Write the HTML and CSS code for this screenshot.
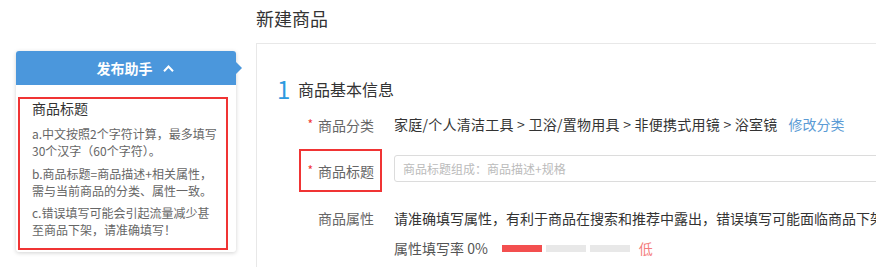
FILE: index.html
```html
<!DOCTYPE html>
<html lang="zh-CN">
<head>
<meta charset="utf-8">
<title>新建商品</title>
<link rel="stylesheet" href="styles.css">
</head>
<body>
<div class="page">
  <aside class="side">
    <div class="helper">
      <div class="helper-head">
        <span class="helper-title">发布助手</span>
        <svg class="chev" width="11" height="7" viewBox="0 0 11 7"><polyline points="1,6.2 5.5,1.5 10,6.2" fill="none" stroke="#fff" stroke-width="2"/></svg>
      </div>
      <div class="helper-body">
        <div class="tip-box">
          <div class="tip-title">商品标题</div>
          <p class="tip">a.中文按照2个字符计算，最多填写<br>30个汉字（60个字符）。</p>
          <p class="tip">b.商品标题=商品描述+相关属性，<br>需与当前商品的分类、属性一致。</p>
          <p class="tip">c.错误填写可能会引起流量减少甚<br>至商品下架，请准确填写！</p>
        </div>
      </div>
    </div>
  </aside>
  <main class="main">
    <h1 class="page-title">新建商品</h1>
    <section class="card">
      <div class="sec-head"><span class="sec-num">1</span><span class="sec-name">商品基本信息</span></div>
      <div class="row r1">
        <div class="label"><span class="star">*</span>商品分类</div>
        <div class="value cat">家庭/个人清洁工具 &gt; 卫浴/置物用具 &gt; 非便携式用镜 &gt; 浴室镜<a class="link">修改分类</a></div>
      </div>
      <div class="row r2">
        <div class="label hl"><span class="star">*</span>商品标题</div>
        <input class="input" type="text" placeholder="商品标题组成：商品描述+规格">
      </div>
      <div class="row r3">
        <div class="label">商品属性</div>
        <div class="value">请准确填写属性，有利于商品在搜索和推荐中露出，错误填写可能面临商品下架或流量损失</div>
      </div>
      <div class="row r4">
        <div class="label"></div>
        <div class="value rate">属性填写率 0%
          <span class="bars"><span class="bar on"></span><span class="bar"></span><span class="bar"></span></span>
          <span class="low">低</span>
        </div>
      </div>
    </section>
  </main>
</div>
</body>
</html>
```

FILE: styles.css
```css
* { box-sizing: border-box; }
html, body { margin: 0; padding: 0; background: #fff; overflow: hidden; }
body {
  font-family: "Noto Sans CJK SC", "Noto Sans", "Liberation Sans", sans-serif;
  color: #333;
  width: 876px;
  height: 267px;
}
.page { display: flex; align-items: flex-start; width: 1200px; }
.side { width: 256px; flex: none; padding: 51px 20px 0 16px; }
.helper {
  width: 220px;
  background: #fff;
  border-radius: 3px;
  box-shadow: 0 1px 4px rgba(0,0,0,0.18);
}
.helper-head {
  position: relative;
  height: 34px;
  background: #4b97dc;
  border-radius: 3px 3px 0 0;
  display: flex;
  align-items: center;
  justify-content: center;
  padding-left: 18px;
  color: #fff;
}
.helper-head::after {
  content: "";
  position: absolute;
  right: -6px;
  top: 11px;
  border-top: 6px solid transparent;
  border-bottom: 6px solid transparent;
  border-left: 6px solid #4b97dc;
}
.helper-title { font-size: 14px; font-weight: bold; line-height: 20px; }
.chev { margin-left: 10px; }
.helper-body { padding: 12px 8px 2px 2px; }
.tip-box {
  border: 2px solid #f03434;
  padding: 0 4px 10px 12px;
}
.tip-title { font-size: 14px; line-height: 18px; color: #333; }
.tip {
  margin: 6px 0 0;
  font-size: 12px;
  line-height: 17px;
  color: #666;
  white-space: nowrap;
}
.tip-title + .tip { margin-top: 8px; }
.tip:last-child { margin-top: 5px; }

.main { flex: none; width: 900px; }
.page-title {
  margin: 7px 0 0;
  font-size: 18px;
  font-weight: normal;
  line-height: 22px;
  color: #333;
}
.card {
  margin-top: 14px;
  border: 1px solid #e8e8e8;
  padding: 34px 0 40px 20px;
  height: 260px;
}
.sec-head { display: flex; align-items: center; height: 22px; }
.sec-num { font-size: 24px; color: #2d9ae0; font-weight: normal; line-height: 22px; width: 21px; }
.sec-name { font-size: 16px; line-height: 22px; color: #333; }
.row { display: flex; align-items: flex-start; margin-left: 22px; }
.r1 { margin-top: 14px; }
.r2 { margin-top: 14px; }
.r3 { margin-top: 16px; }
.r4 { margin-top: 10px; }
.label {
  width: 83px;
  flex: none;
  border: 2px solid transparent;
  border-top: 0; border-bottom: 0;
  padding-right: 6px;
  text-align: right;
  font-size: 14px;
  line-height: 20px;
  color: #666;
}
.label.hl {
  border: 2px solid #f03434;
  height: 43px;
  padding-top: 9px;
}
.star { color: #f03434; font-size: 12px; margin-right: 5px; vertical-align: 2px; }
.value {
  margin-left: 12px;
  font-size: 14px;
  line-height: 20px;
  color: #333;
  white-space: nowrap;
}
.cat { letter-spacing: 0.25px; }
.link { color: #5b9bd5; margin-left: 11px; letter-spacing: 0; }
.input {
  margin-left: 12px;
  margin-top: 6px;
  width: 600px;
  height: 27px;
  border: 1px solid #dcdcdc;
  border-radius: 3px;
  padding: 0 8px;
  font-family: inherit;
  font-size: 12px;
  color: #333;
  outline: none;
}
.input::placeholder { color: #bbb; }
.rate { display: flex; align-items: center; color: #555; }
.bars { display: flex; gap: 4px; margin-left: 14px; }
.bar { width: 40px; height: 7px; background: #e8e8e8; }
.bar.on { background: #f34f4f; }
.low { color: #f47c7c; font-size: 14px; margin-left: 9px; }
```
